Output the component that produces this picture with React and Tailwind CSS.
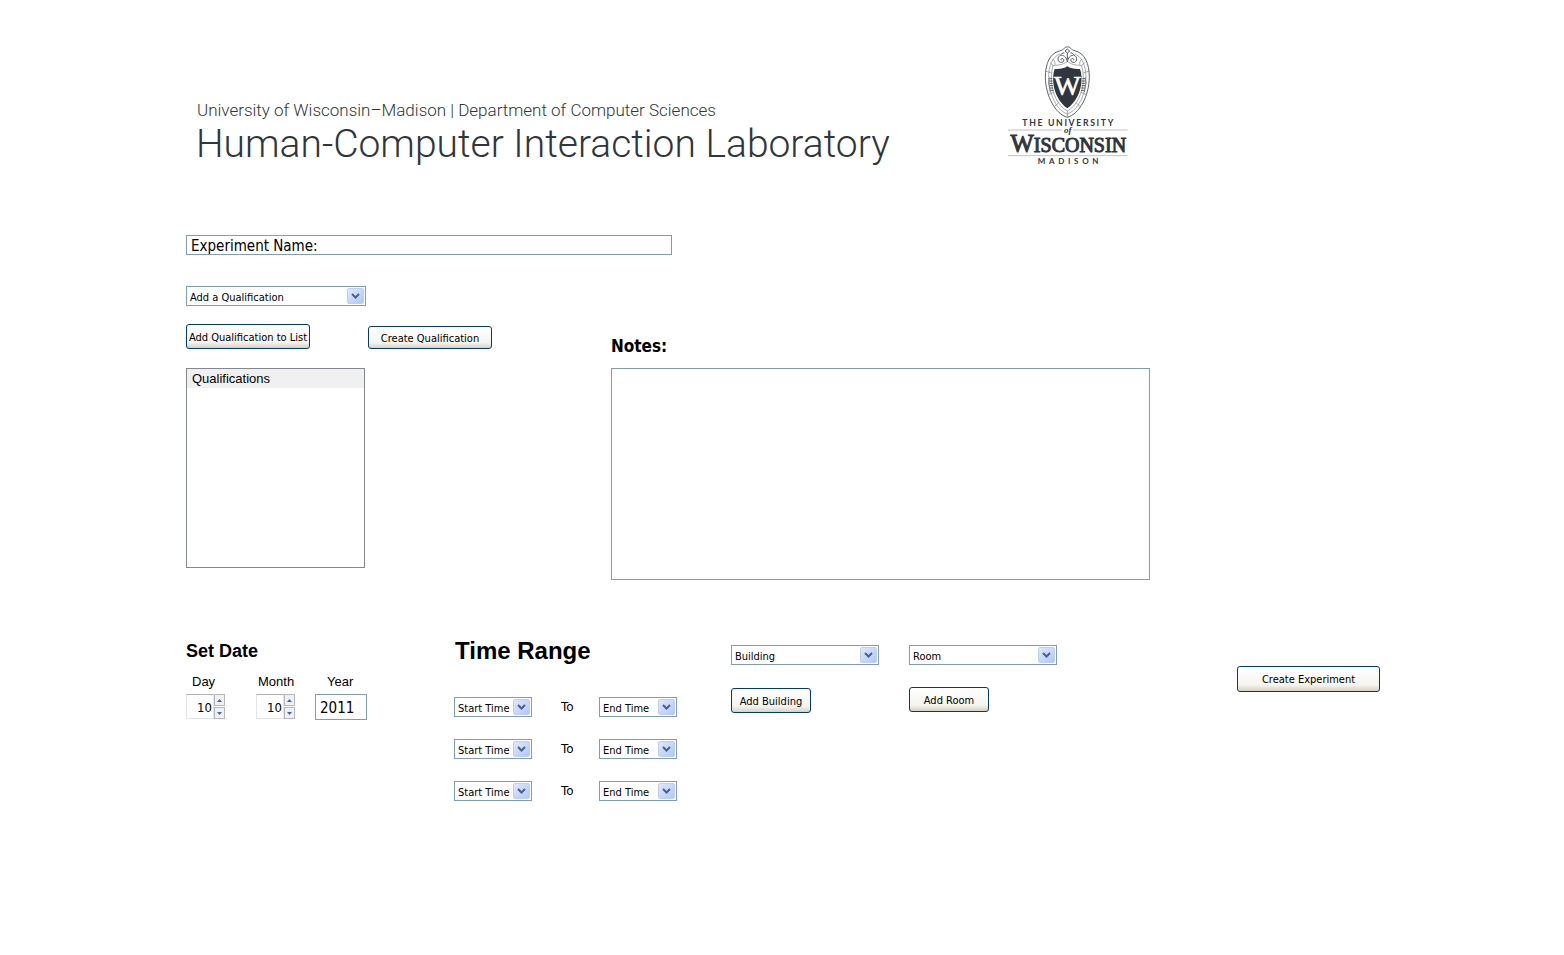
import React, { useState } from "react";

const UI_FONT = "font-['DejaVu_Sans_Condensed','DejaVu_Sans',sans-serif]";

function Crest() {
  return (
    <svg viewBox="0 0 405 390" className="h-[130px] w-[135px] shrink-0" role="img" aria-label="The University of Wisconsin Madison">
      <g fill="none" stroke="#7b7f83" strokeWidth="3">
        <path d="M202 232C166 222 137 168 136 112C136 70 150 40 178 33C186 31 190 28 193 25C198 19 207 19 212 25C215 28 219 31 227 33C254 40 268 70 268 112C267 168 238 222 202 232Z" stroke="#5d6266" />
        <path d="M202 222C172 212 147 166 146 112C146 76 158 50 180 42M202 222C232 212 258 166 258 112C258 76 246 50 224 42" strokeWidth="2" />
        <path d="M202 213C174 198 155 160 154 116C154 98 157 84 159 76C176 76 190 74 202 64C214 74 228 76 245 76C247 84 250 98 250 116C249 160 230 198 202 213Z" strokeWidth="2" />
        <path d="M137 94L154 98M267 94L250 98M150 68L161 78M254 68L243 78M144 164L162 157M260 164L242 157M164 199L177 187M240 199L227 187M202 213V230" strokeWidth="2" />
        <path d="M182 46C172 49 171 64 181 67C190 69 195 60 189 56C185 54 181 58 184 61M222 46C232 49 233 64 223 67C214 69 209 60 215 56C219 54 223 58 220 61M184 46C194 46 199 53 202 65C205 53 210 46 220 46" stroke="#54595d" />
        <path d="M195 33L202 27L209 33L202 39ZM202 39V58M193 39C187 38 184 41 182 46M211 39C217 38 220 41 222 46" stroke="#54595d" />
        <path d="M165 74C166 65 162 58 157 58M239 74C238 65 242 58 247 58" strokeWidth="2" />
      </g>
      <g fill="none" stroke="#555a5e" strokeWidth="3">
        <path d="M148 116H157M148 123H158M148 130H158M149 137H159M150 144H160M151 151H161" />
        <path d="M256 116H247M256 123H246M256 130H246M255 137H245M254 144H244M253 151H243" />
        <path d="M148 112L146 130L151 157M256 112L258 130L253 157" strokeWidth="2" />
      </g>
      <path d="M202 79C193 86 178 88 164 87C159 99 159 116 160 129C163 160 179 189 202 205C225 189 241 160 244 129C245 116 245 99 240 87C226 88 211 86 202 79Z" fill="#30363c" />
      <text x="202" y="165" textAnchor="middle" fontSize="84" fill="#fff" stroke="#fff" strokeWidth="2" fontFamily="Liberation Serif, serif">W</text>
      <g fill="#30363c" fontFamily="Lato, sans-serif">
        <text x="206" y="259" textAnchor="middle" fontSize="26" fontWeight="700" className="tracking-[5px]">THE UNIVERSITY</text>
        <text x="210" y="371" textAnchor="middle" fontSize="24" fontWeight="700" className="tracking-[11px]">MADISON</text>
      </g>
      <path d="M24 270H187M219 270H383M24 347H383" stroke="#a3a5a7" strokeWidth="2" />
      <text x="203" y="280" textAnchor="middle" fontSize="27" fontStyle="italic" fontWeight="700" fill="#30363c" fontFamily="Liberation Serif, serif">of</text>
      <text x="205" y="336" textAnchor="middle" fontSize="60" fill="#30363c" stroke="#30363c" strokeWidth="3" fontFamily="Liberation Serif, serif">
        <tspan fontSize="74">W</tspan>ISCONSIN
      </text>
    </svg>
  );
}

function Select({ label, className }) {
  return (
    <div className={`relative h-5 ${className}`}>
      <select aria-label={label} className={`block h-5 w-full appearance-none border border-[#7f9db9] bg-white pt-[3px] pr-5 pl-[3px] text-[11px] leading-4 text-black ${UI_FONT}`}>
        <option>{label}</option>
      </select>
      <span className="pointer-events-none absolute top-0.5 right-0.5 flex h-4 w-[17px] items-center justify-center rounded-xs border border-[#c0cdf3] bg-linear-to-br from-[#dfe8ff] to-[#b0c8f8]">
        <svg viewBox="0 0 9 6" className="h-1.5 w-[9px]" aria-hidden="true">
          <path d="M1 1L4.500 4.500L8 1" fill="none" stroke="#4d6185" strokeWidth="2" />
        </svg>
      </span>
    </div>
  );
}

function Button({ children, className }) {
  return (
    <button type="button" className={`rounded-[3px] border border-[#003c74] bg-linear-to-b from-white via-[#f5f4ef] via-75% to-[#d8d0c4] pt-0.5 text-[11px] leading-4 whitespace-nowrap text-black ${UI_FONT} ${className}`}>
      {children}
    </button>
  );
}

function Spinner({ label, id, labelClass }) {
  const [value, setValue] = useState(10);
  const step = "flex h-3 w-[11px] items-center justify-center border border-[#b5b7bd] bg-[#eef0f6]";
  return (
    <div>
      <label htmlFor={id} className={`block text-[13px] leading-4 ${labelClass}`}>{label}</label>
      <div className="mt-1 flex h-[25px]">
        <input
          id={id}
          inputMode="numeric"
          value={value}
          onChange={(e) => setValue(Number(e.target.value) || 0)}
          className={`h-[25px] w-7 border border-[#e3e3e8] border-t-[#b0b0b4] pt-0.5 pr-px text-right text-[13px] text-black ${UI_FONT}`}
        />
        <div className="flex flex-col gap-px">
          <button type="button" aria-label={`Increase ${label}`} onClick={() => setValue(value + 1)} className={step}>
            <svg viewBox="0 0 5 3" className="h-[3px] w-[5px]" aria-hidden="true"><path d="M0 3L2.500 0L5 3Z" fill="#4a60bb" /></svg>
          </button>
          <button type="button" aria-label={`Decrease ${label}`} onClick={() => setValue(value - 1)} className={step}>
            <svg viewBox="0 0 5 3" className="h-[3px] w-[5px]" aria-hidden="true"><path d="M0 0L2.500 3L5 0Z" fill="#4a60bb" /></svg>
          </button>
        </div>
      </div>
    </div>
  );
}

export default function App() {
  return (
    <main className="min-h-screen bg-white pl-[186px] font-['Liberation_Sans',sans-serif] text-black">
      <header className="flex h-[235px] items-start pt-10">
        <div className="w-[814px] pt-[58px] pl-2.5 font-[Roboto,sans-serif] font-light text-[#30363c]">
          <p className="pl-px text-[17px] leading-6">University of Wisconsin–Madison | Department of Computer Sciences</p>
          <h1 className="text-[39px] leading-[44px]">Human-Computer Interaction Laboratory</h1>
        </div>
        <Crest />
      </header>

      <form onSubmit={(e) => e.preventDefault()}>
        <input
          aria-label="Experiment Name"
          defaultValue="Experiment Name:"
          className={`block h-5 w-full max-w-[486px] border border-[#7f9db9] px-1 pt-0.5 text-[15px] leading-4 ${UI_FONT}`}
        />
        <Select label="Add a Qualification" className="mt-[31px] w-[180px]" />

        <div className="mt-[18px] flex">
          <section className="w-[425px] shrink-0">
            <div className="flex items-end gap-[58px]">
              <Button className="h-[25px] w-[124px]">Add Qualification to List</Button>
              <Button className="h-[23px] w-[124px]">Create Qualification</Button>
            </div>
            <div className="mt-[19px] h-[200px] w-[179px] border border-[#828790]">
              <h2 className="bg-[#f0f0f0] pl-[5px] text-[13px] leading-[19px]">Qualifications</h2>
            </div>
          </section>
          <section className="w-full max-w-[539px] pt-2.5">
            <label htmlFor="notes" className={`block text-[17px] leading-6 font-bold ${UI_FONT}`}>Notes:</label>
            <textarea id="notes" className="mt-2.5 block h-[212px] w-full resize-none border border-[#7f9db9] p-1" />
          </section>
        </div>

        <div className="mt-[58px] grid grid-cols-[268px_277px_178px_328px_auto] items-start">
          <section>
            <h2 className="pt-px text-[18px] leading-6 font-bold">Set Date</h2>
            <div className="mt-[11px] flex">
              <div className="w-[70px]"><Spinner label="Day" id="day" labelClass="pl-1.5" /></div>
              <div className="w-[59px]"><Spinner label="Month" id="month" labelClass="pl-0.5" /></div>
              <div>
                <label htmlFor="year" className="block pl-3 text-[13px] leading-4">Year</label>
                <input id="year" defaultValue="2011" className={`mt-1 block h-[26px] w-[52px] border border-[#7f9db9] px-1 pt-0.5 text-[15px] ${UI_FONT}`} />
              </div>
            </div>
          </section>

          <section>
            <h2 className="pl-px text-[24px] leading-[26px] font-bold">Time Range</h2>
            <div className="mt-[33px] flex flex-col gap-[22px]">
              {[0, 1, 2].map((i) => (
                <div key={i} className="flex items-center">
                  <Select label="Start Time" className="w-[78px]" />
                  <span className="w-[67px] pl-[29px] font-['DejaVu_Sans',sans-serif] text-[12px] leading-5">To</span>
                  <Select label="End Time" className="w-[78px]" />
                </div>
              ))}
            </div>
          </section>

          <section className="pt-[7px]">
            <Select label="Building" className="w-[148px]" />
            <Button className="mt-[23px] h-[25px] w-20">Add Building</Button>
          </section>
          <section className="pt-[7px]">
            <Select label="Room" className="w-[148px]" />
            <Button className="mt-[22px] h-[25px] w-20">Add Room</Button>
          </section>
          <div className="pt-7">
            <Button className="h-[26px] w-[143px]">Create Experiment</Button>
          </div>
        </div>
      </form>
    </main>
  );
}
